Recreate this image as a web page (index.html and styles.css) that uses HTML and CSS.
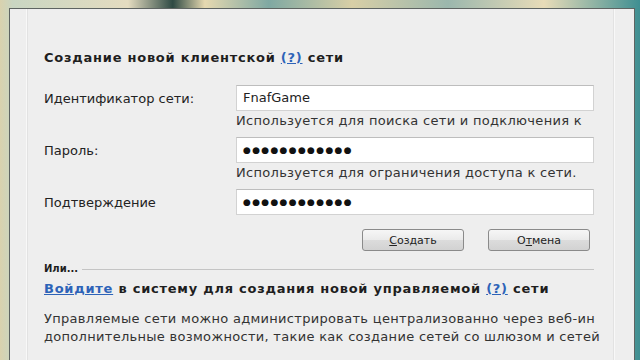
FILE: index.html
```html
<!DOCTYPE html>
<html lang="ru">
<head>
<meta charset="utf-8">
<link rel="stylesheet" href="styles.css">
</head>
<body>
<div class="desk">
  <div class="win">
    <div class="inner">
      <div class="content">
        <h1 class="title">Создание новой клиентской <a class="q">(?)</a> сети</h1>
        <div class="row first">
          <div class="label">Идентификатор сети:</div>
          <div class="field">FnafGame</div>
        </div>
        <div class="help">Используется для поиска сети и подключения к</div>
        <div class="row">
          <div class="label">Пароль:</div>
          <div class="field dots">●●●●●●●●●●●●</div>
        </div>
        <div class="help">Используется для ограничения доступа к сети.</div>
        <div class="row">
          <div class="label">Подтверждение</div>
          <div class="field dots">●●●●●●●●●●●●</div>
        </div>
        <div class="buttons">
          <button class="btn"><u>С</u>оздать</button>
          <button class="btn">О<u>т</u>мена</button>
        </div>
        <div class="sep"><span>Или...</span><i></i></div>
        <div class="login"><a class="link">Войдите</a> в систему для создания новой управляемой <a class="q">(?)</a> сети</div>
        <p class="para">Управляемые сети можно администрировать централизованно через веб-ин<br>дополнительные возможности, такие как создание сетей со шлюзом и сетей</p>
      </div>
    </div>
  </div>
</div>
</body>
</html>
```
FILE: styles.css
```css
html, body {
  margin: 0;
  padding: 0;
  width: 640px;
  height: 360px;
  overflow: hidden;
}
body {
  background: linear-gradient(90deg, #d9d2ae 0%, #c9d6c2 2%, #e4dcc0 20%, #2f4a44 27%, #e6d9b0 32%, #7fa8a2 42%, #d8cfa6 55%, #9bb7ad 70%, #e8dcb8 85%, #3f8f92 100%);
  font-family: "DejaVu Sans", Tahoma, sans-serif;
}
.desk {
  padding: 8px 5px 0 9px;
  height: 352px;
}
.win {
  height: 100%;
  border: 1px solid #5e6462;
  border-bottom: none;
  background: #eeeeee;
  box-sizing: border-box;
}
.inner {
  margin: 0 19px 0 16px;
  height: 100%;
  border-left: 1px solid #f8f8f8;
  border-right: 1px solid #f8f8f8;
  box-shadow: inset 1px 0 0 #e2e2e2, inset -1px 0 0 #e2e2e2;
}
.content {
  padding: 41px 0 0 17px;
  white-space: nowrap;
}
.title {
  margin: 0;
  font-size: 13px;
  font-weight: bold;
  letter-spacing: 0.75px;
  color: #1e1e1e;
  line-height: 16px;
}
.q {
  color: #2d63b8;
  text-decoration: underline;
}
.row {
  display: flex;
  align-items: center;
  height: 26px;
  margin-top: 8px;
}
.row.first {
  margin-top: 19px;
}
.label {
  width: 192px;
  font-size: 13px;
  color: #222;
}
.field {
  width: 358px;
  height: 26px;
  box-sizing: border-box;
  background: #fff;
  border: 1px solid #d2d2d2;
  border-top-color: #bdbdbd;
  font-size: 13px;
  line-height: 24px;
  padding-left: 6px;
  color: #222;
}
.dots {
  font-size: 9px;
  letter-spacing: 1.3px;
  color: #111;
}
.help {
  margin-left: 192px;
  font-size: 13px;
  letter-spacing: 0.3px;
  line-height: 16px;
  margin-top: 2px;
  color: #333;
}
.buttons {
  display: flex;
  gap: 24px;
  justify-content: flex-end;
  width: 550px;
  margin-top: 14px;
  padding-right: 4px;
  box-sizing: border-box;
}
.btn {
  width: 102px;
  height: 22px;
  border: 1px solid #8a8a8a;
  border-radius: 3px;
  background: linear-gradient(180deg, #f6f6f6 0%, #eaeaea 50%, #dcdcdc 51%, #d2d2d2 100%);
  font-family: "DejaVu Sans", Tahoma, sans-serif;
  font-size: 11px;
  color: #222;
  padding: 0;
}
.sep {
  display: flex;
  align-items: center;
  margin-top: 10px;
  width: 550px;
  font-size: 10px;
  font-weight: bold;
  color: #1e1e1e;
  line-height: 16px;
}
.sep i {
  flex: 1;
  height: 1px;
  background: #c4c4c4;
  margin-left: 4px;
}
.login {
  margin-top: 4px;
  font-size: 13px;
  font-weight: bold;
  letter-spacing: 0.75px;
  color: #1e1e1e;
  line-height: 16px;
}
.link {
  color: #2d63b8;
  text-decoration: underline;
}
.para {
  margin: 13px 0 0;
  width: 556px;
  overflow: hidden;
  font-size: 13px;
  letter-spacing: 0.3px;
  line-height: 18px;
  color: #333;
}
```
